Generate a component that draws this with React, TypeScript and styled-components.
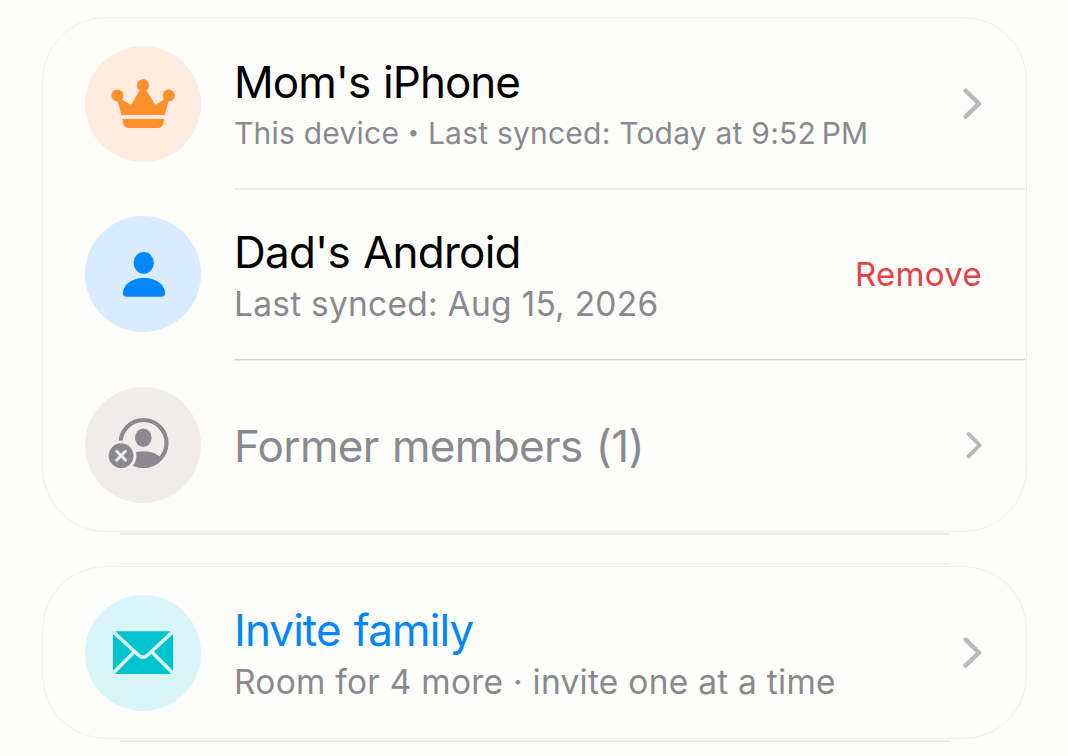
import React from "react";
import styled, { createGlobalStyle } from "styled-components";

const GlobalStyle = createGlobalStyle`
  * {
    box-sizing: border-box;
  }
  body {
    margin: 0;
    background: #fdfdfb;
    font-family: Inter, "Liberation Sans", sans-serif;
    overflow: hidden;
  }
`;

const Page = styled.main`
  display: flex;
  flex-direction: column;
  gap: 34px;
  width: 1068px;
  height: 756px;
  padding: 17px 41px 0 42px;
`;

const Card = styled.section<{ $topEdge?: boolean }>`
  position: relative;
  flex: none;
  border: 1px solid #f1efed;
  border-radius: 64px;

  &::after {
    content: "";
    position: absolute;
    left: 77px;
    right: 76px;
    bottom: -4px;
    height: 2px;
    background: #f0eceb;
  }

  &::before {
    content: "";
    display: ${(props) => (props.$topEdge ? "block" : "none")};
    position: absolute;
    left: 77px;
    right: 76px;
    top: -4px;
    height: 1px;
    background: #f0eceb;
  }
`;

const Row = styled.div`
  display: flex;
  align-items: center;
  height: 171px;
  padding-left: 42px;
`;

const Avatar = styled.div<{ $color: string; $lift?: number }>`
  flex: none;
  width: 116px;
  height: 116px;
  margin-right: 33px;
  margin-bottom: ${(props) => props.$lift ?? 0}px;
  border-radius: 50%;
  background: ${(props) => props.$color};

  svg {
    display: block;
  }
`;

const Content = styled.div<{ $divider?: string }>`
  flex: 1;
  display: flex;
  align-items: center;
  justify-content: space-between;
  height: 100%;
  margin-right: 1px;
  padding-right: 43px;
  border-bottom: ${(props) =>
    props.$divider ? `1px solid ${props.$divider}` : "none"};
  box-shadow: ${(props) => (props.$divider ? "0 1px 0 #f0eceb" : "none")};
`;

const Texts = styled.div<{ $drop?: number }>`
  padding-top: ${(props) => props.$drop ?? 0}px;
  white-space: nowrap;
`;

const Title = styled.div<{ $color?: string; $spacing: number }>`
  font-size: 44px;
  line-height: 52px;
  letter-spacing: ${(props) => props.$spacing}px;
  word-spacing: 1.5px;
  color: ${(props) => props.$color ?? "#000"};
`;

const Subtitle = styled.div<{ $small?: boolean }>`
  margin-top: ${(props) => (props.$small ? 0 : 1)}px;
  font-size: ${(props) => (props.$small ? 30 : 33.5)}px;
  line-height: 50px;
  letter-spacing: ${(props) => (props.$small ? 0.22 : 0.25)}px;
  color: #8a8a8e;
`;

const Bullet = styled.span`
  font-size: 20px;
  line-height: 1;
  vertical-align: 5px;
`;

const RemoveButton = styled.button`
  padding: 0;
  border: 0;
  background: none;
  font: 400 33px/40px Inter, "Liberation Sans", sans-serif;
  letter-spacing: 0.3px;
  color: #e93f44;
`;

const Chevron: React.FC<{ small?: boolean }> = ({ small }) => (
  <svg
    width={small ? 16 : 19}
    height={small ? 27 : 31}
    viewBox={small ? "0 0 16 27" : "0 0 19 31"}
    fill="none"
    stroke="#b9b9bc"
    strokeWidth={small ? 3.8 : 4.4}
    strokeLinecap="round"
    strokeLinejoin="round"
  >
    <path d={small ? "M2.5 1.9 13.6 13.1 2.5 24.3" : "M2.6 2.7 16 15.7 2.6 28.7"} />
  </svg>
);

const CrownIcon = () => (
  <svg width="116" height="116" viewBox="0 0 116 116" fill="#ff8f2b">
    <circle cx="58" cy="39.2" r="6.1" />
    <circle cx="32.4" cy="49.5" r="6" />
    <circle cx="83.8" cy="49.5" r="6" />
    <path d="M32.5 54.7 36.5 69H79.8L83.7 54.7 80 52.7 71.5 58.2Q70.3 58.9 69.5 57.7L61 43.7H55L46.8 57.7Q46 58.9 44.7 58.2L36 52.7Z" />
    <path d="M37.2 73.1H79.2L78 78.2Q76.8 81.9 73 81.9H43.4Q39.6 81.9 38.4 78.2Z" />
  </svg>
);

const PersonIcon = () => (
  <svg width="116" height="116" viewBox="0 0 116 116" fill="#0286fb">
    <ellipse cx="58.7" cy="46.9" rx="10.1" ry="10.9" />
    <path d="M41.5 80.7Q37.8 80.7 37.9 77C38.4 68.7 46.5 62 59 62S79.6 68.7 80.1 77Q80.2 80.7 76.5 80.7Z" />
  </svg>
);

const FormerIcon = () => (
  <svg width="116" height="116" viewBox="0 0 116 116" fill="#8a8a8e">
    <circle cx="58.5" cy="56" r="23" fill="none" stroke="#8a8a8e" strokeWidth="4.1" />
    <ellipse cx="58.3" cy="50.7" rx="8.3" ry="9.2" />
    <path d="M42 74C44.5 67.5 50.5 64.3 58.3 64.3S72.5 66.6 76 71.2C71.5 77 65.5 80.2 58.5 80.2S46 78 42 74Z" />
    <circle cx="36.1" cy="68.7" r="15.3" fill="#f0eceb" />
    <circle cx="36.1" cy="68.7" r="12.4" />
    <path
      d="M31.7 64.3 40.5 73.1M40.5 64.3 31.7 73.1"
      stroke="#f0eceb"
      strokeWidth="2.9"
      strokeLinecap="round"
    />
  </svg>
);

const MailIcon = () => (
  <svg width="116" height="116" viewBox="0 0 116 116">
    <rect x="28" y="36.2" width="60" height="42.8" rx="4" fill="#00c3d0" />
    <path
      d="M27 35.6 53.5 60.2Q58 64.2 62.5 60.2L89 35.6M27 79.2 49.4 56.8M89 79.2 66.6 56.8"
      fill="none"
      stroke="#d9f5fa"
      strokeWidth="3.5"
    />
  </svg>
);

function App() {
  return (
    <>
      <GlobalStyle />
      <Page>
        <Card>
          <Row>
            <Avatar $color="#ffebdf">
              <CrownIcon />
            </Avatar>
            <Content $divider="#ebe8e7">
              <Texts $drop={7}>
                <Title $spacing={-0.98}>Mom's iPhone</Title>
                <Subtitle $small>
                  This device <Bullet>•</Bullet> Last synced: Today at
                  9:52&#8201;PM
                </Subtitle>
              </Texts>
              <Chevron />
            </Content>
          </Row>
          <Row>
            <Avatar $color="#d9ebfe" $lift={1}>
              <PersonIcon />
            </Avatar>
            <Content $divider="#d4d4d5">
              <Texts $drop={7}>
                <Title $spacing={-0.78}>Dad's Android</Title>
                <Subtitle>Last synced: Aug 15, 2026</Subtitle>
              </Texts>
              <RemoveButton>Remove</RemoveButton>
            </Content>
          </Row>
          <Row>
            <Avatar $color="#f0eceb" $lift={1}>
              <FormerIcon />
            </Avatar>
            <Content>
              <Texts>
                <Title $color="#8a8a8e" $spacing={-0.65}>
                  Former members (1)
                </Title>
              </Texts>
              <Chevron small />
            </Content>
          </Row>
        </Card>
        <Card $topEdge>
          <Row>
            <Avatar $color="#d9f5fa">
              <MailIcon />
            </Avatar>
            <Content>
              <Texts $drop={6}>
                <Title $color="#0286fb" $spacing={-0.92}>
                  Invite family
                </Title>
                <Subtitle>Room for 4 more · invite one at a time</Subtitle>
              </Texts>
              <Chevron />
            </Content>
          </Row>
        </Card>
      </Page>
    </>
  );
}

export default App;
